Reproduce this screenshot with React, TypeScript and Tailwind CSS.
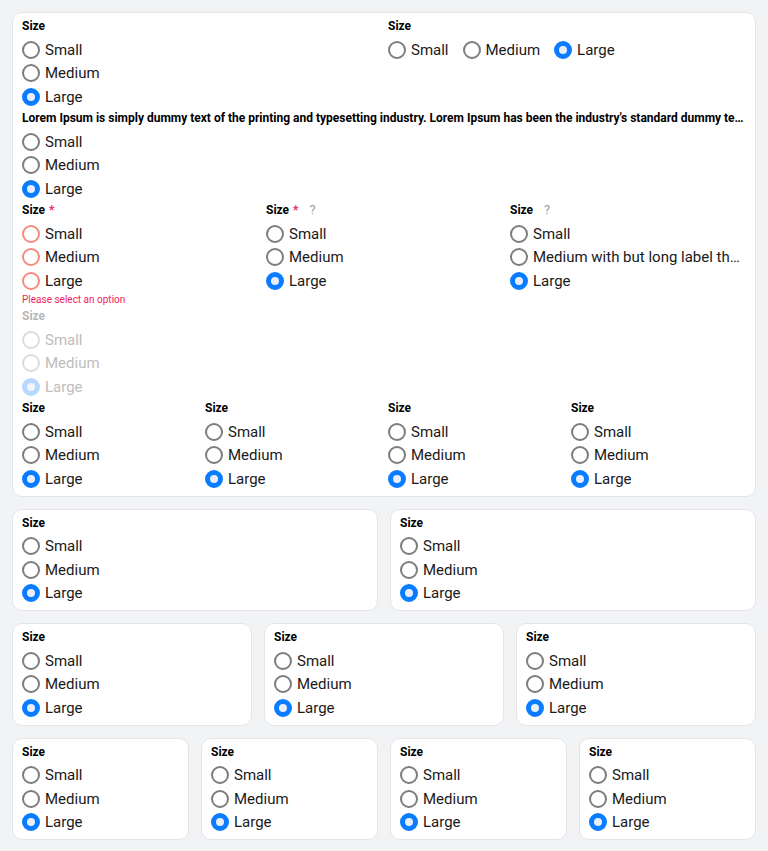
import { useState } from "react";

type Opt = { value: string; label: string };

const sizes: Opt[] = [
  { value: "s", label: "Small" },
  { value: "m", label: "Medium" },
  { value: "l", label: "Large" },
];

function Radio({ checked, error, disabled }: { checked: boolean; error?: boolean; disabled?: boolean }) {
  let cls = "border-2 border-[#7d7d7d] bg-white";
  if (checked) cls = "border-[5px] border-[#0a7cff] bg-[#e8eefa]";
  if (error) cls = "border-2 border-[#f58b7e] bg-white";
  if (disabled) cls = checked ? "border-[5px] border-[#b7d8ff] bg-[#f3f6fb]" : "border-2 border-[#dcdcdc] bg-white";
  return <span className={`w-[18px] h-[18px] shrink-0 rounded-full ${cls}`}></span>;
}

function Field({
  label,
  options = sizes,
  initial = "l",
  required,
  help,
  error,
  disabled,
  inline,
}: {
  label: string;
  options?: Opt[];
  initial?: string;
  required?: boolean;
  help?: boolean;
  error?: string;
  disabled?: boolean;
  inline?: boolean;
}) {
  const [value, setValue] = useState(error ? "" : initial);
  return (
    <div className="min-w-0">
      <div className={`h-4 mb-1 flex items-center text-xs font-bold truncate ${disabled ? "text-[#b8b8b8]" : "text-black"}`}>
        <span className="truncate">{label}</span>
        {required && <span className="ml-1 text-[#f0245f]">*</span>}
        {help && <span className="ml-[11px] text-[13px] font-normal text-[#a0a0a0]">?</span>}
      </div>
      <div className={inline ? "flex gap-[14px]" : "flex flex-col"}>
        {options.map((o) => (
          <label
            key={o.value}
            onClick={() => !disabled && setValue(o.value)}
            className={`h-[23.5px] flex items-center gap-[5px] min-w-0 text-[15px] ${disabled ? "text-[#bdbdbd]" : "text-[#1a1a1a] cursor-pointer"}`}
          >
            <Radio checked={value === o.value} error={!!error} disabled={disabled} />
            <span className="truncate">{o.label}</span>
          </label>
        ))}
      </div>
      {error && <div className="text-[10px] leading-[14px] text-[#f0245f]">{error}</div>}
    </div>
  );
}

function Card({ children }: { children: React.ReactNode }) {
  return <div className="bg-white border border-[#e3e5e9] rounded-[10px] px-[9px] pt-[5px] pb-[5px] min-w-0">{children}</div>;
}

export default function App() {
  return (
    <main className="min-h-[851px] bg-[#f2f3f5] p-3 flex flex-col gap-3 font-['Roboto',sans-serif]">
      <Card>
        <div className="flex flex-col gap-[1.5px]">
          <div className="grid grid-cols-2 gap-2">
            <Field label="Size" />
            <Field label="Size" inline />
          </div>
          <Field label="Lorem Ipsum is simply dummy text of the printing and typesetting industry. Lorem Ipsum has been the industry's standard dummy text ever since the 1500s" />
          <div className="grid grid-cols-3 gap-2">
            <Field label="Size" required error="Please select an option" />
            <Field label="Size" required help />
            <Field
              label="Size"
              help
              options={[
                { value: "s", label: "Small" },
                { value: "m", label: "Medium with but long label that does not fit" },
                { value: "l", label: "Large" },
              ]}
            />
          </div>
          <Field label="Size" disabled />
          <div className="grid grid-cols-4 gap-2">
            <Field label="Size" />
            <Field label="Size" />
            <Field label="Size" />
            <Field label="Size" />
          </div>
        </div>
      </Card>
      <div className="grid grid-cols-2 gap-3">
        <Card><Field label="Size" /></Card>
        <Card><Field label="Size" /></Card>
      </div>
      <div className="grid grid-cols-3 gap-3">
        <Card><Field label="Size" /></Card>
        <Card><Field label="Size" /></Card>
        <Card><Field label="Size" /></Card>
      </div>
      <div className="grid grid-cols-4 gap-3">
        <Card><Field label="Size" /></Card>
        <Card><Field label="Size" /></Card>
        <Card><Field label="Size" /></Card>
        <Card><Field label="Size" /></Card>
      </div>
    </main>
  );
}
